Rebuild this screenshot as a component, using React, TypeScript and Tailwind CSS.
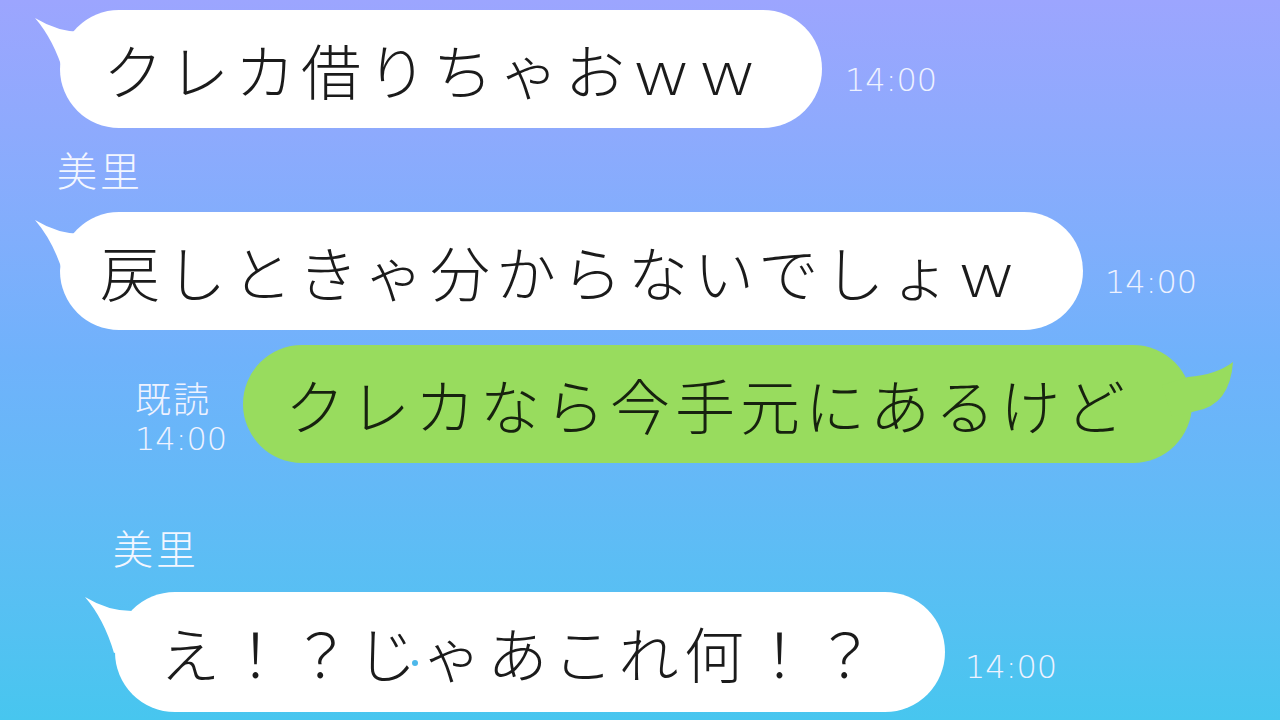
import React from "react";

const jp = { fontFamily: '"Noto Sans CJK JP", "Noto Sans", sans-serif' };
const num = { fontFamily: '"DejaVu Sans", "Liberation Sans", sans-serif' };

// tail of an incoming bubble, pointing up-left
const Tail: React.FC<{ className: string }> = ({ className }) => (
  <svg viewBox="0 0 100 80" width="100" height="80" className={`absolute ${className}`}>
    <path d="M5 8 Q28 22 52 22 L75 50 L34 64 Q24 30 5 8 Z" fill="#ffffff" />
  </svg>
);

// tail of my own bubble, pointing up-right
const MyTail: React.FC = () => (
  <svg viewBox="0 0 110 80" width="110" height="80" className="absolute left-[889px] top-0">
    <path d="M101 17 Q84 30 56 32 L30 40 L40 72 L64 66 Q98 60 101 17 Z" fill="#98dc5e" />
  </svg>
);

const Time: React.FC<{ className?: string }> = ({ className = "" }) => (
  <div
    style={num}
    className={`text-[32px] leading-none font-extralight text-[#eef2ff] ${className}`}
  >
    14:00
  </div>
);

const Name: React.FC<{ className?: string }> = ({ className = "" }) => (
  <div style={jp} className={`text-[40px] leading-none tracking-[3px] font-light text-[#f3f6ff] ${className}`}>
    美里
  </div>
);

const App: React.FC = () => {
  return (
    <div className="w-[1280px] h-[720px] overflow-hidden bg-linear-to-b from-[#9ca5fe] via-[#6fb2fb] to-[#47c6ef]">
      {/* message 1 */}
      <div className="flex mt-[10px]">
        <div className="relative ml-[60px] w-[762px] h-[118px] rounded-full bg-white flex items-center pl-[43px]">
          <Tail className="-left-[30px] top-0" />
          <span style={jp} className="relative text-[60px] leading-none tracking-[6px] font-light text-[#1b1b1b]">
            クレカ借りちゃおｗｗ
          </span>
        </div>
        <Time className="self-end mb-[32px] ml-[23px]" />
      </div>

      <Name className="ml-[57px] mt-[21px]" />

      {/* message 2 */}
      <div className="flex mt-[23px]">
        <div className="relative ml-[60px] w-[1023px] h-[118px] rounded-full bg-white flex items-center pl-[40px]">
          <Tail className="-left-[30px] top-0" />
          <span style={jp} className="relative text-[60px] leading-none tracking-[6px] font-light text-[#1b1b1b]">
            戻しときゃ分からないでしょｗ
          </span>
        </div>
        <Time className="self-end mb-[32px] ml-[22px]" />
      </div>

      {/* my message */}
      <div className="flex mt-[15px]">
        <div className="ml-[135px] w-[92px] mt-[34px] flex flex-col gap-[8px] text-[#eef2ff]">
          <div style={jp} className="text-[36px] leading-none tracking-[2px] font-light">
            既読
          </div>
          <Time />
        </div>
        <div className="relative ml-[16px] w-[949px] h-[118px] rounded-full bg-[#98dc5e] flex items-center pl-[42px]">
          <MyTail />
          <span style={jp} className="relative text-[60px] leading-none tracking-[5px] font-light text-[#17220f]">
            クレカなら今手元にあるけど
          </span>
        </div>
      </div>

      <Name className="ml-[113px] mt-[64px]" />

      {/* message 3 */}
      <div className="flex mt-[25px]">
        <div className="relative ml-[115px] w-[830px] h-[120px] rounded-full bg-white flex items-center pl-[45px]">
          <Tail className="-left-[35px] -top-[3px]" />
          <span style={jp} className="relative text-[60px] leading-none tracking-[5.5px] font-light text-[#1b1b1b]">
            え！？じゃあこれ何！？
          </span>
          <span className="absolute left-[297px] top-[68px] w-[6px] h-[6px] rounded-full bg-[#4db8ea]" />
        </div>
        <Time className="self-end mb-[29px] ml-[20px]" />
      </div>
    </div>
  );
};

export default App;
